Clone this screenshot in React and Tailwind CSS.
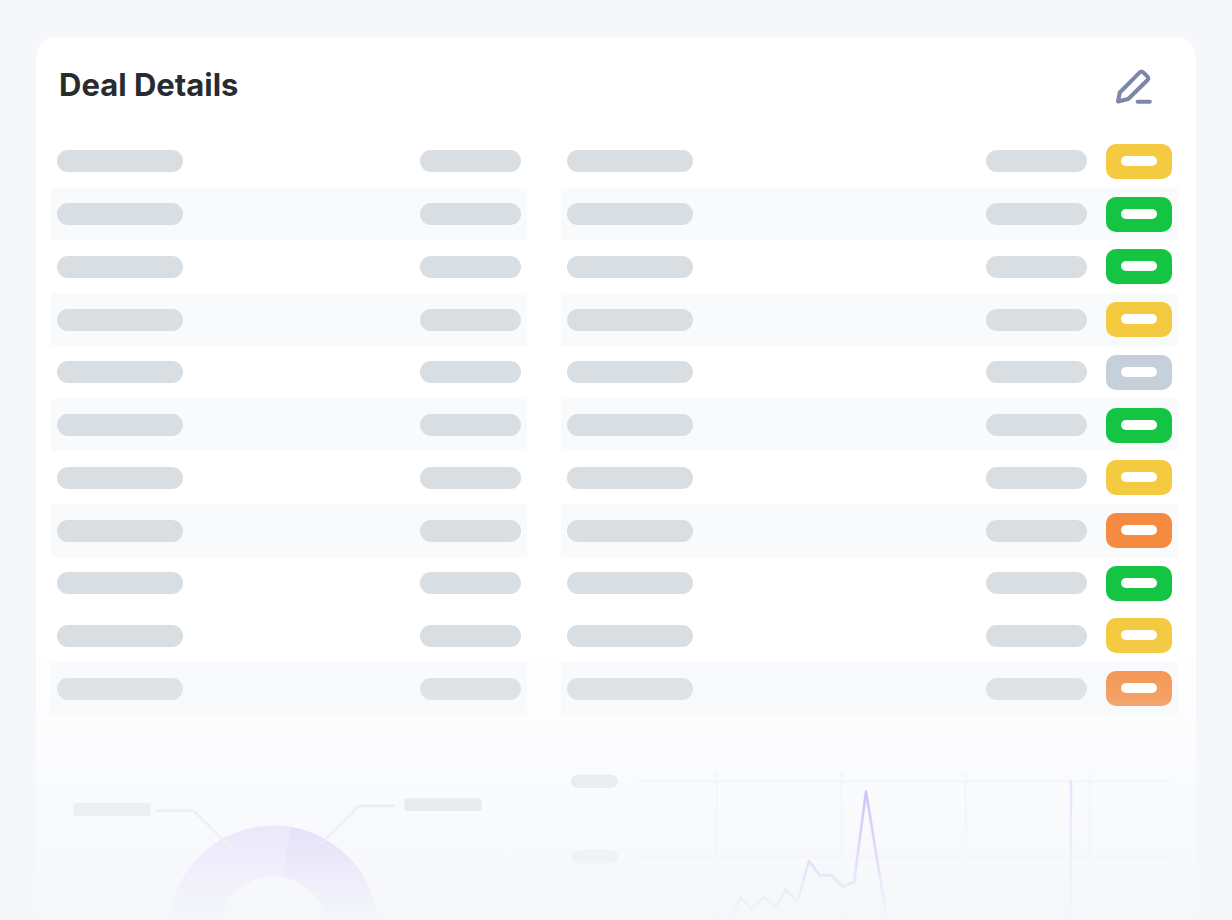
import React from 'react';
import clsx from 'clsx';

const rows = [
  { status: 'warning', shaded: false },
  { status: 'good', shaded: true },
  { status: 'good', shaded: false },
  { status: 'warning', shaded: true },
  { status: 'none', shaded: false },
  { status: 'good', shaded: true },
  { status: 'warning', shaded: false },
  { status: 'risk', shaded: true },
  { status: 'good', shaded: false },
  { status: 'warning', shaded: false },
  { status: 'risk', shaded: true },
];

const statusColors = {
  warning: 'bg-[#f3ca40]',
  good: 'bg-[#14c544]',
  risk: 'bg-[#f48b40]',
  none: 'bg-[#c5d0db]',
};

function Bar({ className }) {
  return <div className={clsx('h-[22px] rounded-full bg-[#d9dee2]', className)} />;
}

function StatusBadge({ status }) {
  return (
    <div
      className={clsx(
        'flex h-[35px] w-[66px] justify-center rounded-[10px] pt-3',
        statusColors[status]
      )}
    >
      <div className="h-[10px] w-9 rounded-full bg-white" />
    </div>
  );
}

function DetailRows({ withStatus }) {
  return (
    <div className="flex h-[580px] flex-col">
      {rows.map((row, index) => (
        <div
          key={index}
          className={clsx(
            'flex flex-1 items-center justify-between px-[6px]',
            row.shaded && 'bg-[#f9fafc]'
          )}
        >
          <Bar className="w-[126px]" />
          <div className="flex items-center gap-[19px]">
            <Bar className="w-[101px]" />
            {withStatus && <StatusBadge status={row.status} />}
          </div>
        </div>
      ))}
    </div>
  );
}

function DonutChart() {
  return (
    <svg viewBox="0 0 476 160" className="block w-full" fill="none">
      {/* Ring */}
      <path
        d="M117.5 170.5 A105 105 0 0 1 239 66.8 L232 117.3 A54 54 0 0 0 168.5 170.5 Z"
        fill="#d9c8fb"
      />
      <path
        d="M239 66.8 A105 105 0 0 1 327.5 170.5 L276.5 170.5 A54 54 0 0 0 232 117.3 Z"
        fill="#c6b2f7"
      />
      {/* Labels */}
      <rect x="22.5" y="43" width="77" height="13" rx="2" fill="#dee5e7" />
      <path d="M106 50.7 H142.5 L180 88" stroke="#e0e2e5" strokeWidth="2.4" />
      <rect x="353.5" y="38.5" width="77" height="12.5" rx="2" fill="#d2dadd" />
      <path d="M344 46 H308 L270 84" stroke="#dcdee2" strokeWidth="2.4" />
    </svg>
  );
}

function LineChart() {
  return (
    <svg viewBox="0 0 617 160" className="block w-full" fill="none">
      {/* Grid */}
      <path d="M78 21.5 H608 M78 97 H608" stroke="#f3f4f5" strokeWidth="2.5" />
      <path
        d="M155.7 13 V160 M280.5 13 V160 M404.5 13 V160 M529 13 V160"
        stroke="#f4f5f7"
        strokeWidth="2.5"
      />
      {/* Axis labels */}
      <rect x="10" y="14.7" width="47" height="13.3" rx="6.6" fill="#dde1e7" />
      <rect x="10" y="90" width="47" height="13.3" rx="6.6" fill="#dde1e7" />
      {/* Series */}
      <path
        d="M167 164 L179.7 137 L190.5 149 L202.5 137 L215.3 147 L224.5 130 L236.5 141 L248 101 L259 115.5 H271 L281.5 126.5 L293 122.5 L305 31.5 L326.5 163"
        stroke="#9e8bf0"
        strokeWidth="2.6"
        strokeLinejoin="round"
      />
      <path d="M510 20 V160" stroke="#d9d1fb" strokeWidth="2.5" />
    </svg>
  );
}

function App() {
  return (
    <main className="relative min-h-screen overflow-hidden bg-[#f5f7fb] px-9 pt-[37px] font-['Inter',sans-serif]">
      <section className="rounded-t-[20px] bg-white pr-[18px] pl-[15px]">
        <header className="flex items-center justify-between pt-7 pr-6 pb-[30px] pl-2">
          <h1 className="text-[31px] leading-10 font-bold text-[#282c31]">Deal Details</h1>
          <button type="button" aria-label="Edit deal" className="text-[#7c87ab]">
            <svg
              viewBox="0 0 40 40"
              className="block size-10"
              fill="none"
              stroke="currentColor"
              strokeWidth="4.1"
              strokeLinecap="round"
              strokeLinejoin="round"
            >
              <path d="M4 36.4 L5.8 27.5 L25.5 7.6 Q27.5 5.6 29.5 7.6 L33.3 11.4 Q35.1 13.3 33.3 15.2 L14.2 34 Z" />
              <path d="M23.7 36.7 H35.8" />
            </svg>
          </button>
        </header>

        {/* Details */}
        <div className="grid grid-cols-[476fr_617fr] gap-x-[34px]">
          <DetailRows />
          <DetailRows withStatus />
        </div>

        {/* Charts */}
        <div className="mt-[45px] grid grid-cols-[476fr_617fr] gap-x-[34px]">
          <DonutChart />
          <LineChart />
        </div>
      </section>

      {/* Bottom fade */}
      <div className="pointer-events-none absolute inset-x-0 bottom-0 h-[280px] bg-linear-to-b from-[#f5f7fb]/0 to-[#f5f7fb]" />
    </main>
  );
}

export default App;
